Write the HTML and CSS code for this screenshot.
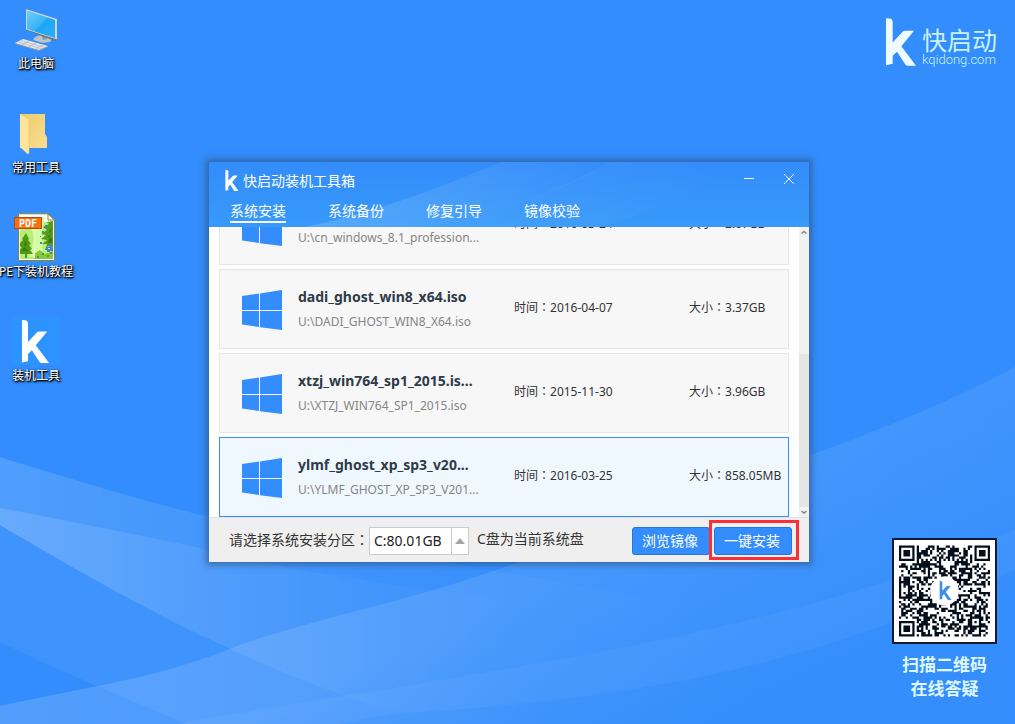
FILE: index.html
```html
<!DOCTYPE html>
<html lang="zh-CN">
<head>
<meta charset="utf-8">
<title>快启动装机工具箱</title>
<link rel="stylesheet" href="styles.css">
</head>
<body>
<svg class="defs" aria-hidden="true">
  <symbol id="k" viewBox="0 0 90 143"><path d="M0 1Q8-1 14 2Q20 4 20 11V73L50 41Q53 38 58 38H84L46 84L90 143H66Q61 143 58 139L33 101L20 113V137L0 141Z"/></symbol>
  <symbol id="win" viewBox="0 0 40 40"><path d="M0 6L17 3.500V20H0ZM18 3.400L40 0V20H18ZM0 21H17V37L0 34.500ZM18 21H40V40L18 37.200Z"/></symbol>
</svg>
<main class="desktop">
  <svg class="wallpaper" viewBox="0 0 1015 724" preserveAspectRatio="none" aria-hidden="true">
    <defs>
      <linearGradient id="a" gradientUnits="userSpaceOnUse" x1="0" y1="0" x2="740" y2="0"><stop offset="0" stop-color="#fff" stop-opacity=".14"/><stop offset=".5" stop-color="#fff" stop-opacity=".05"/><stop offset="1" stop-color="#fff" stop-opacity="0"/></linearGradient>
      <linearGradient id="b" gradientUnits="userSpaceOnUse" x1="0" y1="0" x2="520" y2="0"><stop offset="0" stop-color="#fff" stop-opacity=".14"/><stop offset=".4" stop-color="#fff" stop-opacity=".06"/><stop offset="1" stop-color="#fff" stop-opacity="0"/></linearGradient>
      <linearGradient id="c" gradientUnits="userSpaceOnUse" x1="0" y1="0" x2="1015" y2="0"><stop offset="0" stop-color="#fff" stop-opacity=".15"/><stop offset=".4" stop-color="#fff" stop-opacity=".1"/><stop offset="1" stop-color="#fff" stop-opacity=".07"/></linearGradient>
      <linearGradient id="e" gradientUnits="userSpaceOnUse" x1="600" y1="560" x2="680" y2="740"><stop offset="0" stop-color="#338dfc" stop-opacity="0"/><stop offset="1" stop-color="#338dfc" stop-opacity=".9"/></linearGradient>
    </defs>
    <path fill="url(#a)" d="M0 457C70 479 140 500 205 516C300 534 520 578 780 620L740 724H440L397 713C240 665 110 590 0 525Z"/>
    <path fill="url(#b)" d="M0 508C80 523 180 543 301 570C390 586 480 597 567 603L540 724H440L397 713C240 665 110 590 0 525Z"/>
    <path fill="#fff" fill-opacity=".06" d="M0 525C110 590 240 665 397 713L440 724H187C140 704 70 676 0 642Z"/>
    <path fill="url(#c)" d="M1015 367C880 440 700 490 516 563C400 605 310 618 227 650C150 680 80 688 0 706V724H1015Z"/>
    <path fill="url(#e)" d="M1015 367C880 440 700 490 516 563C400 605 310 618 227 650L187 724H1015Z"/>
    <path fill="#fff" fill-opacity=".045" d="M176 724C400 684 680 650 890 580L1015 530V570L890 623C738 680 567 705 397 713L340 724Z"/>
  </svg>

  <nav class="shortcuts" aria-label="桌面">
    <a class="shortcut" href="#pc">
      <svg viewBox="0 0 48 48"><defs><linearGradient id="scr" x1="0" y1="0" x2="1" y2="1"><stop offset="0" stop-color="#6fd0fa"/><stop offset=".5" stop-color="#35b2f5"/><stop offset=".5" stop-color="#1fa5f3"/><stop offset="1" stop-color="#28b0fa"/></linearGradient></defs>
        <path fill="#b9c4cc" d="M23 32L31 29L40 34L38 37L31 38L21 35Z"/><path fill="#8e9aa3" d="M29 29H35V34L31 35Z"/>
        <path fill="#66727c" d="M14 4L45 14V35L43 36L14 25Z"/><path fill="#c9d6df" d="M14 4L45 14V34.500L14 24.500Z"/><path fill="url(#scr)" d="M15 5.500L43 15V33L15 24Z"/>
        <path fill="#8b969e" d="M3 38L11 34L36 41V42L27 46L3 39Z"/><path fill="#e4e8eb" d="M3 38L11 34L36 41L27 45Z"/><path d="M6 37L30 44M9 35.500L33 42.500M10 40L17 36M17 42L24 38M24 43.500L31 40" stroke="#aab4bb" stroke-width=".7"/></svg>
      <span>此电脑</span></a>
    <a class="shortcut" href="#tools">
      <svg viewBox="0 0 48 48"><defs><linearGradient id="fo" x1="0" y1="0" x2="1" y2="1"><stop offset="0" stop-color="#edcb6d"/><stop offset="1" stop-color="#f9df91"/></linearGradient></defs><path fill="url(#fo)" d="M8 5H33V25L35 28V39H8Z"/><path fill="#ffe59a" d="M8 5L17 11V44.500L15.500 45L8 38Z"/><path d="M17 11V44" stroke="#e5c168" stroke-width=".6"/></svg>
      <span>常用工具</span></a>
    <a class="shortcut" href="#guide">
      <svg viewBox="0 0 48 48"><path fill="#fff" stroke="#86862a" d="M6.500 0.800H36L42.500 7V47.500H6.500Z"/><path fill="#b7ed79" d="M8 9H41V46H8Z"/><path fill="#d4ff9e" d="M17 4H33L30 18L31 44H17L22 26Z"/><path fill="#fff" d="M7 2H22L25 6L22 11H7Z"/>
        <path fill="#4f9a12" d="M14 20L17 26L16 27L19 31L17 32L20 36L18 37L21 41H15V45H13V41H8V36L10 35L8 33V30L11 27L10 26Z"/>
        <path fill="#579d1b" d="M41 8V35L37 33L34 35L35 31L30 31L35 27L29 26L34 22L29 21L35 17L31 14L37 11L35 9Z"/><path fill="#397b12" d="M13 27L15 31L12 34L17 38H10L12 34ZM40 14L37 19L40 20L35 24L40 25V30H36Z"/>
        <path fill="#86c940" d="M22 41L28 37L33 41L41 38V46H22Z"/><path fill="#579d1b" d="M25 43H27V45H25ZM30 40H32V42H30ZM35 42H37V44H35ZM38 39H40V41H38Z"/><path fill="#eaffd0" d="M22 17H23V45H22Z"/>
        <path fill="#3e83dc" d="M34 34H37V32H40V35H41V38H38V39H35V37H33ZM30 18H32V20H30ZM28 29H30V31H28ZM33 12H35V14H33ZM28 23H29V24H28Z"/><path fill="#d9eaff" d="M36 35H38V36H36ZM31 22H32V24H31Z"/>
        <path fill="#fff" stroke="#86862a" d="M36 1V7H42.500Z"/><rect x="2.500" y="4.500" width="27" height="11" fill="#f97012" stroke="#bd4708"/><text x="16" y="13.500" text-anchor="middle" class="pdf-tag">PDF</text></svg>
      <span>PE下装机教程</span></a>
    <a class="shortcut" href="#installer">
      <svg viewBox="0 0 48 48"><rect width="48" height="48" rx="1" fill="#2d94ff"/><use href="#k" x="9" y="3" width="29" height="43" fill="#fff"/></svg>
      <span>装机工具</span></a>
  </nav>

  <div class="brand">
    <svg class="brand-k"><use href="#k"/></svg>
    <div><div class="brand-name">快启动</div><div class="brand-url">kqidong.com</div></div>
  </div>

  <aside class="support">
    <svg class="qr" id="qr" viewBox="0 0 41 41" role="img" aria-label="二维码"></svg>
    <p>扫描二维码<br>在线答疑</p>
  </aside>

  <section class="window" aria-label="快启动装机工具箱">
    <header class="head">
      <svg class="head-art" viewBox="0 0 600 65" preserveAspectRatio="none" aria-hidden="true"><defs><linearGradient id="h" x1="0" y1="0" x2="1" y2="0"><stop offset="0" stop-color="#fff" stop-opacity=".16"/><stop offset="1" stop-color="#fff" stop-opacity="0"/></linearGradient></defs><path fill="url(#h)" d="M96 65C170 50 230 25 293 0H410C350 28 300 48 215 65Z"/><path fill="url(#h)" d="M215 65C300 48 350 28 400 0H520Q480 40 390 65Z" opacity=".45"/></svg>
      <div class="titlebar">
        <svg class="head-k"><use href="#k"/></svg>
        <h1>快启动装机工具箱</h1>
        <button type="button" aria-label="最小化"><svg viewBox="0 0 12 12"><path d="M1 5.500H11"/></svg></button>
        <button type="button" aria-label="关闭"><svg viewBox="0 0 12 12"><path d="M1 1L11 11M11 1L1 11"/></svg></button>
      </div>
      <nav class="tabs"><a class="on" href="#install">系统安装</a><a href="#backup">系统备份</a><a href="#repair">修复引导</a><a href="#verify">镜像校验</a></nav>
    </header>
    <div class="body">
      <ul class="list">
        <li class="item"><svg class="win"><use href="#win"/></svg><div class="file"><strong>&nbsp;</strong><span>U:\cn_windows_8.1_profession...</span></div><span class="date">时间<i lang="zh-TW">：</i>2016-03-24</span><span class="size">大小<i lang="zh-TW">：</i>2.67GB</span></li>
        <li class="item"><svg class="win"><use href="#win"/></svg><div class="file"><strong>dadi_ghost_win8_x64.iso</strong><span>U:\DADI_GHOST_WIN8_X64.iso</span></div><span class="date">时间<i lang="zh-TW">：</i>2016-04-07</span><span class="size">大小<i lang="zh-TW">：</i>3.37GB</span></li>
        <li class="item"><svg class="win"><use href="#win"/></svg><div class="file"><strong>xtzj_win764_sp1_2015.is...</strong><span>U:\XTZJ_WIN764_SP1_2015.iso</span></div><span class="date">时间<i lang="zh-TW">：</i>2015-11-30</span><span class="size">大小<i lang="zh-TW">：</i>3.96GB</span></li>
        <li class="item selected"><svg class="win"><use href="#win"/></svg><div class="file"><strong>ylmf_ghost_xp_sp3_v20...</strong><span>U:\YLMF_GHOST_XP_SP3_V201...</span></div><span class="date">时间<i lang="zh-TW">：</i>2016-03-25</span><span class="size">大小<i lang="zh-TW">：</i>858.05MB</span></li>
      </ul>
      <div class="scroll" aria-hidden="true"><svg viewBox="0 0 10 10"><path d="M2.500 6.500L5 4.500L7.500 6.500"/></svg><div class="thumb"></div><svg viewBox="0 0 10 10"><path d="M2.500 4L5 6L7.500 4"/></svg></div>
    </div>
    <footer class="foot">
      <label for="part">请选择系统安装分区<i lang="zh-TW">：</i></label>
      <div class="select"><select id="part"><option>C:80.01GB</option></select></div>
      <span class="note">C盘为当前系统盘</span>
      <button type="button" class="btn">浏览镜像</button>
      <div class="primary"><button type="button" class="btn">一键安装</button></div>
    </footer>
  </section>
</main>
<script src="qr.js"></script>
</body>
</html>
```
FILE: qr.js
```js
const N = 41;
let seed = 20160407;
const rand = () => (seed = (seed * 1103515245 + 12345) % 2147483648) / 2147483648;

// Concentric square marker; returns null outside it.
function marker(x, y, cx, cy, radius, ring) {
  const d = Math.max(Math.abs(x - cx), Math.abs(y - cy));
  return d > radius ? null : ring[d];
}

const finder = [1, 1, 0, 1, 0];
let d = '';
for (let y = 0; y < N; y++) {
  for (let x = 0; x < N; x++) {
    const random = rand() > 0.47;
    let v = marker(x, y, 3, 3, 4, finder) ?? marker(x, y, 37, 3, 4, finder) ?? marker(x, y, 3, 37, 4, finder) ?? marker(x, y, 34, 34, 2, [1, 0, 1]);
    if (v === null) v = y === 6 || x === 6 ? (x + y) % 2 === 0 : random;
    if (v) d += `M${x} ${y}h1v1h-1z`;
  }
}
document.getElementById('qr').innerHTML =
  `<path d="${d}" fill="#050f1c"/><circle cx="20.500" cy="20.500" r="6.500" fill="#fff"/><use href="#k" x="18" y="16" width="6" height="8.500" fill="#3d8fe8"/>`;
```
FILE: styles.css
```css
* { box-sizing: border-box; }
body { margin: 0; font-family: "Noto Sans", "Noto Sans CJK SC", sans-serif; font-size: 12px; color: #333; }
h1, p, ul { margin: 0; padding: 0; }
i { font-style: normal; font-family: "Noto Sans CJK TC", sans-serif; }
a { color: inherit; text-decoration: none; }
button { font: inherit; color: inherit; background: none; border: 0; padding: 0; }
.defs { position: absolute; width: 0; height: 0; }

.desktop { position: relative; min-height: 100vh; overflow: hidden; background: #338dfc; }
.wallpaper { position: absolute; inset: 0; width: 100%; height: 100%; }

.shortcuts { position: absolute; left: 0; top: 5px; width: 72px; display: grid; grid-template-columns: 72px; gap: 36px; }
.shortcut { display: flex; flex-direction: column; align-items: center; gap: 2px; color: #fff; }
.shortcut svg { width: 48px; height: 48px; }
.shortcut span { line-height: 18px; white-space: nowrap; text-shadow: 1px 1px 1px #000, 0 1px 2px rgba(0, 0, 0, .8), 1px 1px 3px #000; }
.pdf-tag { font: bold 10px "DejaVu Sans Mono", monospace; fill: #fff; }

.brand { position: absolute; right: 18px; top: 18px; display: flex; gap: 6px; color: #c9f1ff; }
.brand-k { width: 30px; height: 48px; fill: #eefcff; }
.brand-name { font-size: 25px; line-height: 28px; margin-top: 7px; font-family: "Noto Sans CJK SC", sans-serif; font-weight: 400; }
.brand-url { font: 13px/14px Roboto, sans-serif; font-weight: 300; }

.support { position: absolute; right: 18px; bottom: 24px; color: #dff8ff; text-align: center; }
.qr { display: block; width: 105px; height: 106px; padding: 5px; background: #fff; border: 2px solid #0b1c33; }
.support p { font: bold 17px/24px "Noto Sans CJK SC", sans-serif; padding-top: 8px; }

.window { position: absolute; left: 209px; top: 162px; width: 600px; background: #fff; box-shadow: 0 0 6px 3px rgba(48, 78, 120, .6); }
.head { position: relative; height: 65px; color: #fff; background: linear-gradient(#338cfb, #379af9); }
.head-art { position: absolute; inset: 0; width: 100%; height: 100%; }
.titlebar { position: relative; display: flex; align-items: center; height: 38px; padding: 0 14px 0 16px; }
.head-k { width: 14px; height: 21px; margin-bottom: 2px; fill: #fff; }
.titlebar h1 { flex: 1; padding-left: 4px; font-size: 14px; font-weight: 400; line-height: 20px; }
.titlebar button { width: 12px; height: 12px; margin-left: 28px; margin-bottom: 4px; }
.titlebar button svg { display: block; fill: none; stroke: #fff; }
.tabs { position: relative; display: flex; gap: 42px; padding-left: 21px; font-size: 14px; line-height: 22px; }
.tabs a { height: 23px; border-bottom: 2px solid transparent; }
.tabs .on { border-color: #fff; }

.body { display: flex; height: 290px; overflow: hidden; }
.list { flex: 1; display: flex; flex-direction: column; justify-content: flex-end; gap: 4px; padding: 0 10px; list-style: none; }
.item { flex: none; height: 80px; display: grid; grid-template-columns: 40px 200px 175px 1fr; align-items: center; padding: 2px 0 0 22px; background: #f7f7f7; border: 1px solid #e5e5e5; white-space: nowrap; }
.item.selected { background: #f0f8ff; border-color: #338dfc; }
.win { width: 40px; height: 40px; fill: #338dfc; }
.file { padding-left: 16px; }
.file strong { display: block; font-size: 14px; line-height: 18px; color: #2f3b4a; }
.file span { display: block; padding-top: 6px; line-height: 20px; color: #858585; }
.date, .size { line-height: 20px; padding: 0 0 6px 32px; }
.scroll { display: flex; flex-direction: column; justify-content: flex-end; width: 10px; background: #f1f1f1; }
.scroll svg { width: 10px; height: 10px; fill: none; stroke: #858585; stroke-width: 1.5; }
.scroll svg:first-child { margin-bottom: auto; }
.thumb { height: 153px; background: #e5e5e5; }

.foot { display: flex; align-items: center; height: 45px; padding: 2px 17px 0 20px; background: #efefef; border-top: 1px solid #e2e2e2; font-size: 14px; }
.foot label, .note { line-height: 20px; padding-bottom: 4px; white-space: nowrap; }
.select { position: relative; width: 100px; height: 28px; background: #fff; border: 1px solid #ccc; }
.select select { width: 100%; height: 100%; appearance: none; border: 0; padding: 0 4px 2px; background: none; font: inherit; color: #222; }
.select::after { content: ""; position: absolute; right: 3px; top: 10px; border: 5px solid transparent; border-top: 0; border-bottom: 6px solid #a5a5a5; }
.select::before { content: ""; position: absolute; right: 16px; top: 0; bottom: 0; border-left: 1px solid #ccc; }
.note { flex: 1; padding-left: 8px; }
.btn { width: 78px; height: 28px; padding: 0 2px 3px 0; color: #fff; background: #338dfc; border: 1px solid #2277dd; border-radius: 3px; }
.primary { position: relative; margin-left: 4px; }
.primary::after { content: ""; position: absolute; inset: -7px -7px -5px -5px; border: 3px solid #fb3037; }
```
